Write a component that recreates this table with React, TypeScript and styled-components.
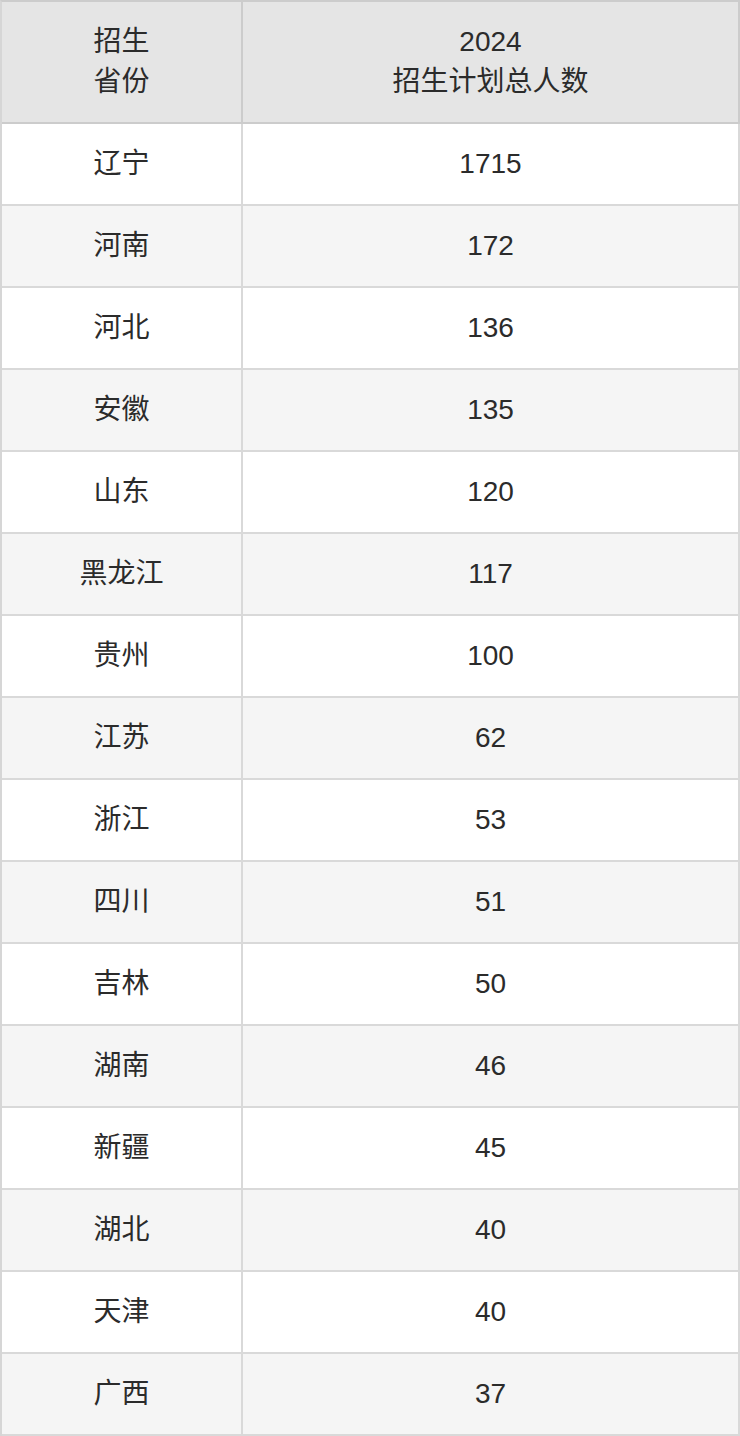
import styled, { createGlobalStyle } from "styled-components";

const GlobalStyle = createGlobalStyle`
  html, body {
    margin: 0;
    padding: 0;
    background: #ffffff;
  }
`;

const Table = styled.table`
  width: 740px;
  border-collapse: separate;
  border-spacing: 0;
  table-layout: fixed;
  border-top: 2px solid #cccccc;
  border-left: 2px solid #d6d6d6;
  font-family: "Liberation Sans", "Noto Sans CJK SC", sans-serif;
  font-size: 28px;
  color: #2b2b2b;
`;

const HeadCell = styled.th<{ $first?: boolean }>`
  width: ${(p) => (p.$first ? "239px" : "auto")};
  height: 120px;
  padding: 0;
  background: #e5e5e5;
  border-right: 2px solid #cccccc;
  border-bottom: 2px solid #cccccc;
  font-weight: normal;
  text-align: center;
  vertical-align: middle;
  line-height: 40px;
`;

const Row = styled.tr<{ $alt: boolean }>`
  background: ${(p) => (p.$alt ? "#f5f5f5" : "#ffffff")};
`;

const Cell = styled.td`
  height: 80px;
  padding: 0;
  border-right: 2px solid #d9d9d9;
  border-bottom: 2px solid #d9d9d9;
  text-align: center;
  vertical-align: middle;
  line-height: 40px;
`;

const rows: [string, number][] = [
  ["辽宁", 1715],
  ["河南", 172],
  ["河北", 136],
  ["安徽", 135],
  ["山东", 120],
  ["黑龙江", 117],
  ["贵州", 100],
  ["江苏", 62],
  ["浙江", 53],
  ["四川", 51],
  ["吉林", 50],
  ["湖南", 46],
  ["新疆", 45],
  ["湖北", 40],
  ["天津", 40],
  ["广西", 37],
];

export default function App() {
  return (
    <>
      <GlobalStyle />
      <Table>
        <thead>
          <tr>
            <HeadCell $first>
              招生
              <br />
              省份
            </HeadCell>
            <HeadCell>
              2024
              <br />
              招生计划总人数
            </HeadCell>
          </tr>
        </thead>
        <tbody>
          {rows.map(([province, total], i) => (
            <Row key={province + i} $alt={i % 2 === 1}>
              <Cell>{province}</Cell>
              <Cell>{total}</Cell>
            </Row>
          ))}
        </tbody>
      </Table>
    </>
  );
}
